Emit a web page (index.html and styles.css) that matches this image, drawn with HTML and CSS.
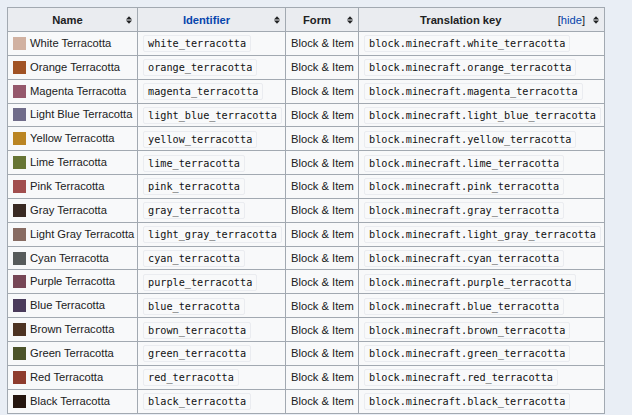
FILE: index.html
```html
<!DOCTYPE html>
<html lang="en">
<head>
  <meta charset="UTF-8">
  <title>Terracotta data values</title>
  <link rel="stylesheet" href="styles.css">
</head>
<body>

<table class="wikitable">
  <colgroup>
    <col class="col-name">
    <col class="col-id">
    <col class="col-form">
    <col class="col-key">
  </colgroup>
  <thead>
    <tr>
      <th><div class="head"><span class="label">Name</span><svg class="sort" viewBox="0 0 7 9"><polygon points="0,4 3.5,0 7,4"/><polygon points="0,5 7,5 3.5,9"/></svg></div></th>
      <th><div class="head"><span class="label link">Identifier</span><svg class="sort" viewBox="0 0 7 9"><polygon points="0,4 3.5,0 7,4"/><polygon points="0,5 7,5 3.5,9"/></svg></div></th>
      <th><div class="head"><span class="label">Form</span><svg class="sort" viewBox="0 0 7 9"><polygon points="0,4 3.5,0 7,4"/><polygon points="0,5 7,5 3.5,9"/></svg></div></th>
      <th><div class="head"><span class="label">Translation key</span><span class="toggle">[<span class="link">hide</span>]</span><svg class="sort" viewBox="0 0 7 9"><polygon points="0,4 3.5,0 7,4"/><polygon points="0,5 7,5 3.5,9"/></svg></div></th>
    </tr>
  </thead>
  <tbody>
    <tr><td><span class="swatch" style="background:#d1b1a1"></span>White Terracotta</td><td><code>white_terracotta</code></td><td>Block &amp; Item</td><td><code>block.minecraft.white_terracotta</code></td></tr>
    <tr><td><span class="swatch" style="background:#a15325"></span>Orange Terracotta</td><td><code>orange_terracotta</code></td><td>Block &amp; Item</td><td><code>block.minecraft.orange_terracotta</code></td></tr>
    <tr><td><span class="swatch" style="background:#95586c"></span>Magenta Terracotta</td><td><code>magenta_terracotta</code></td><td>Block &amp; Item</td><td><code>block.minecraft.magenta_terracotta</code></td></tr>
    <tr><td><span class="swatch" style="background:#706c8a"></span>Light Blue Terracotta</td><td><code>light_blue_terracotta</code></td><td>Block &amp; Item</td><td><code>block.minecraft.light_blue_terracotta</code></td></tr>
    <tr><td><span class="swatch" style="background:#ba8523"></span>Yellow Terracotta</td><td><code>yellow_terracotta</code></td><td>Block &amp; Item</td><td><code>block.minecraft.yellow_terracotta</code></td></tr>
    <tr><td><span class="swatch" style="background:#677535"></span>Lime Terracotta</td><td><code>lime_terracotta</code></td><td>Block &amp; Item</td><td><code>block.minecraft.lime_terracotta</code></td></tr>
    <tr><td><span class="swatch" style="background:#a14e4e"></span>Pink Terracotta</td><td><code>pink_terracotta</code></td><td>Block &amp; Item</td><td><code>block.minecraft.pink_terracotta</code></td></tr>
    <tr><td><span class="swatch" style="background:#392a23"></span>Gray Terracotta</td><td><code>gray_terracotta</code></td><td>Block &amp; Item</td><td><code>block.minecraft.gray_terracotta</code></td></tr>
    <tr><td><span class="swatch" style="background:#876b62"></span>Light Gray Terracotta</td><td><code>light_gray_terracotta</code></td><td>Block &amp; Item</td><td><code>block.minecraft.light_gray_terracotta</code></td></tr>
    <tr><td><span class="swatch" style="background:#575b5b"></span>Cyan Terracotta</td><td><code>cyan_terracotta</code></td><td>Block &amp; Item</td><td><code>block.minecraft.cyan_terracotta</code></td></tr>
    <tr><td><span class="swatch" style="background:#764656"></span>Purple Terracotta</td><td><code>purple_terracotta</code></td><td>Block &amp; Item</td><td><code>block.minecraft.purple_terracotta</code></td></tr>
    <tr><td><span class="swatch" style="background:#4a3b5b"></span>Blue Terracotta</td><td><code>blue_terracotta</code></td><td>Block &amp; Item</td><td><code>block.minecraft.blue_terracotta</code></td></tr>
    <tr><td><span class="swatch" style="background:#4d3323"></span>Brown Terracotta</td><td><code>brown_terracotta</code></td><td>Block &amp; Item</td><td><code>block.minecraft.brown_terracotta</code></td></tr>
    <tr><td><span class="swatch" style="background:#4c532a"></span>Green Terracotta</td><td><code>green_terracotta</code></td><td>Block &amp; Item</td><td><code>block.minecraft.green_terracotta</code></td></tr>
    <tr><td><span class="swatch" style="background:#8e3c2e"></span>Red Terracotta</td><td><code>red_terracotta</code></td><td>Block &amp; Item</td><td><code>block.minecraft.red_terracotta</code></td></tr>
    <tr><td><span class="swatch" style="background:#251610"></span>Black Terracotta</td><td><code>black_terracotta</code></td><td>Block &amp; Item</td><td><code>block.minecraft.black_terracotta</code></td></tr>
  </tbody>
</table>

</body>
</html>
```

FILE: styles.css
```css
body {
  margin: 0;
  padding: 7px;
  background: #e9eef5;
  font-family: "Liberation Sans", Arial, sans-serif;
  font-size: 11.2px;
  color: #202122;
}
.wikitable {
  border-collapse: collapse;
  table-layout: fixed;
  width: 597px;
  background: #f8f9fa;
  border: 1px solid #a2a9b1;
}
.col-name { width: 130px; }
.col-id { width: 148px; }
.col-form { width: 73px; }
.col-key { width: 246px; }
.wikitable th,
.wikitable td {
  border: 1px solid #a2a9b1;
  height: 23.85px;
  padding: 0 5px;
  box-sizing: border-box;
  white-space: nowrap;
  vertical-align: middle;
}
.wikitable th {
  background: #eaecf0;
  font-weight: bold;
  height: 24px;
  padding: 0 5px;
}
.head {
  display: flex;
  align-items: center;
}
.label {
  flex: 1;
  text-align: center;
}
.link {
  color: #0645ad;
}
.toggle {
  font-weight: normal;
  margin-right: 4px;
}
.sort {
  width: 6px;
  height: 8px;
  fill: #202122;
  margin-left: 4px;
}
.swatch {
  display: inline-block;
  width: 13px;
  height: 13px;
  margin-right: 4px;
  vertical-align: -3px;
}
code {
  font-family: "DejaVu Sans Mono", monospace;
  font-size: 10.2px;
  color: #101112;
  background: #f8f9fa;
  border: 1px solid #eaecf0;
  border-radius: 2px;
  padding: 2px 4px;
}
```
